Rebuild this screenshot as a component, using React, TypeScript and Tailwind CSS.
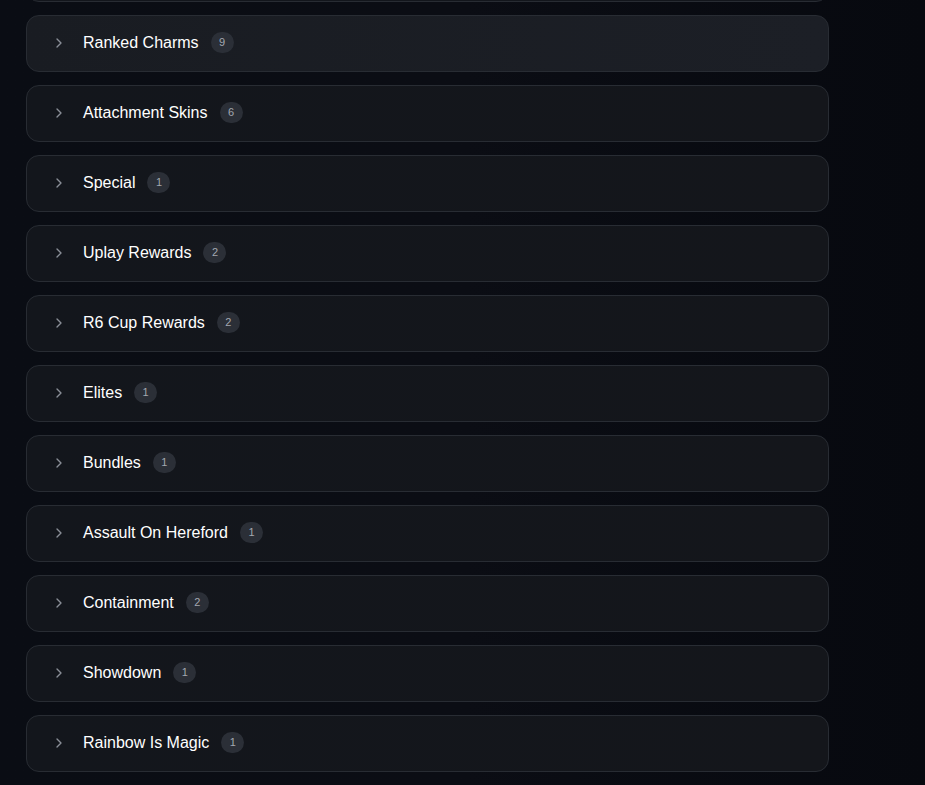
import React from 'react';
import { ChevronRight } from 'lucide-react';

const groups = [
  { name: 'Ranked Charms', count: 9 },
  { name: 'Attachment Skins', count: 6 },
  { name: 'Special', count: 1 },
  { name: 'Uplay Rewards', count: 2 },
  { name: 'R6 Cup Rewards', count: 2 },
  { name: 'Elites', count: 1 },
  { name: 'Bundles', count: 1 },
  { name: 'Assault On Hereford', count: 1 },
  { name: 'Containment', count: 2 },
  { name: 'Showdown', count: 1 },
  { name: 'Rainbow Is Magic', count: 1 },
];

const GroupRow: React.FC<{ name: string; count: number; active?: boolean }> = ({ name, count, active }) => (
  <div
    className={`flex items-center h-[57px] shrink-0 rounded-[13px] border border-[#282c33] pl-[24px] pb-[2px] gap-4 ${
      active ? 'bg-gradient-to-r from-[#191c22] to-[#1c1f26]' : 'bg-gradient-to-r from-[#13161c] to-[#14161b]'
    }`}
  >
    <ChevronRight size={16} strokeWidth={2} className="text-[#8a8f98]" />
    <span className="text-white text-[16px] leading-none">{name}</span>
    <span className="flex items-center justify-center w-[23px] h-[21px] rounded-full bg-[#2b2f37] text-[#a3a8b0] text-[11px] leading-none -ml-1">
      {count}
    </span>
  </div>
);

export default function App() {
  return (
    <div
      className="h-[785px] overflow-hidden bg-gradient-to-r from-[#0a0d14] via-[#0b0d14] to-[#07090f]"
      style={{ fontFamily: '"Liberation Sans", Arial, sans-serif' }}
    >
      <div className="flex flex-col gap-[13px] w-[803px] ml-[26px] -mt-[55px]">
        <div className="h-[57px] shrink-0 rounded-[13px] border border-[#282c33] bg-[#13161c]" />
        {groups.map((g, i) => (
          <GroupRow key={g.name} name={g.name} count={g.count} active={i === 0} />
        ))}
        <div className="h-[57px] shrink-0 rounded-[13px] border border-[#282c33] bg-[#13161c]" />
      </div>
    </div>
  );
}
